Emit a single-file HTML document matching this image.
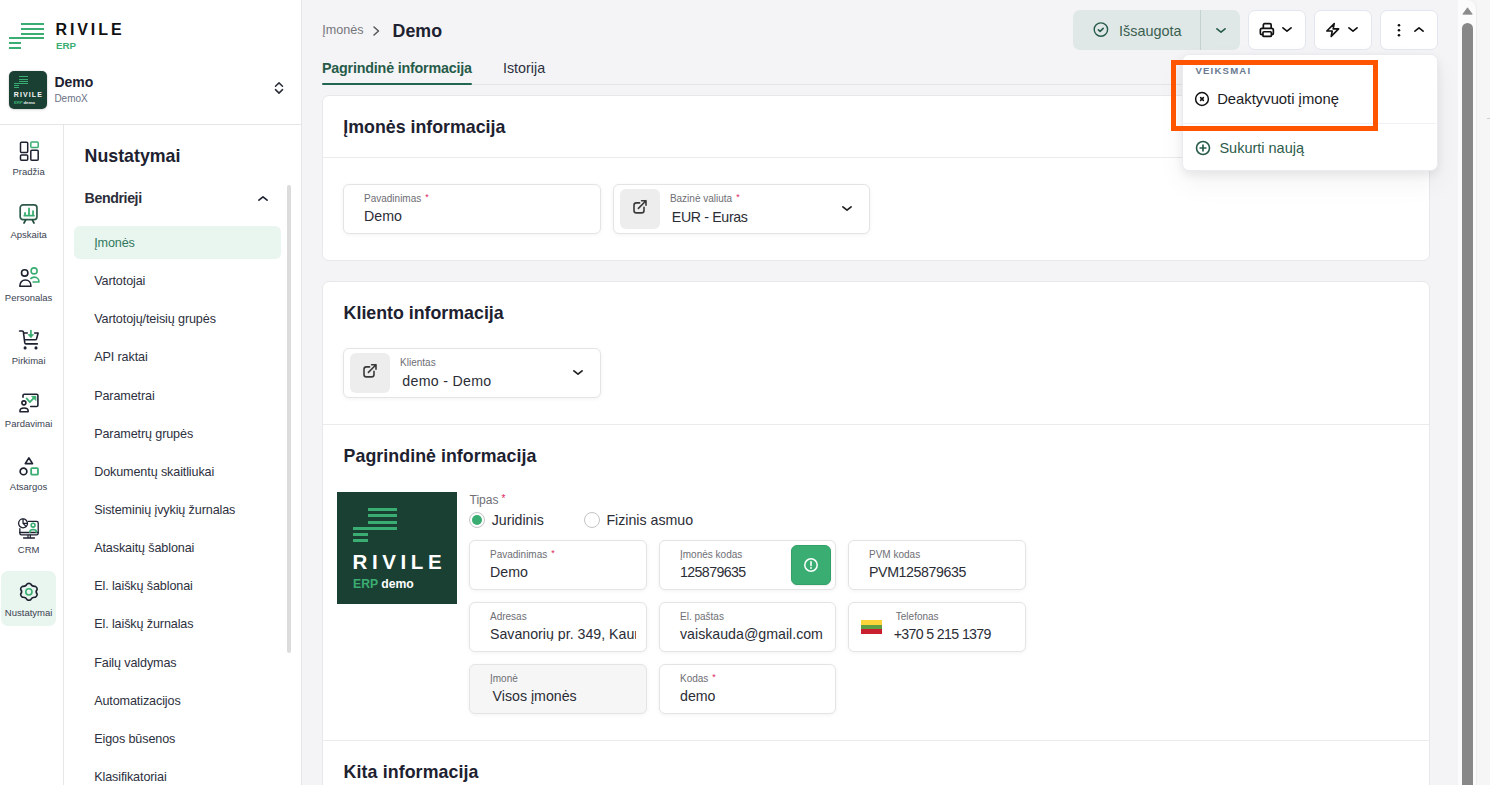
<!DOCTYPE html>
<html><head><meta charset="utf-8"><style>
html,body{margin:0;padding:0;width:1490px;height:785px;overflow:hidden;background:#f4f4f6}
body{position:relative;font-family:"Liberation Sans", sans-serif}
.a{position:absolute}
.t{position:absolute;line-height:1;white-space:nowrap}
svg.a{overflow:visible}
</style></head><body>
<div class="a" style="left:0px;top:0px;width:1490px;height:785px;background:#f4f4f6"></div>
<div class="a" style="left:0px;top:0px;width:301px;height:785px;background:#fff;border-right:1px solid #e6e6e9;box-sizing:border-box;width:302px"></div>
<div class="a" style="left:0px;top:124px;width:301px;height:1px;background:#e6e6e9"></div>
<div class="a" style="left:63px;top:125px;width:1px;height:660px;background:#e6e6e9"></div>
<div class="a" style="left:21px;top:23px;width:23px;height:2.1px;background:#3aae72"></div>
<div class="a" style="left:21px;top:28px;width:23px;height:2.1px;background:#3aae72"></div>
<div class="a" style="left:21px;top:32.6px;width:23px;height:2.1px;background:#3aae72"></div>
<div class="a" style="left:9px;top:37.2px;width:35px;height:2.1px;background:#3aae72"></div>
<div class="a" style="left:9px;top:42px;width:12px;height:2.1px;background:#3aae72"></div>
<div class="a" style="left:9px;top:46.7px;width:12px;height:2.1px;background:#3aae72"></div>
<div class="t" style="left:55.50px;top:22.00px;font-size:16px;font-weight:700;color:#111;letter-spacing:2.9px;">RIVILE</div>
<div class="t" style="left:56.00px;top:41.00px;font-size:9.8px;font-weight:700;color:#3aae72;letter-spacing:0px;">ERP</div>
<div class="a" style="left:9px;top:71px;width:38px;height:38px;background:#1a4034;border-radius:5px;box-shadow:0 0 0 1px rgba(0,0,0,0.04),0 1px 3px rgba(0,0,0,0.12)"></div>
<div class="a" style="left:18.8px;top:76.4px;width:9.3px;height:1.1px;background:#3aae72"></div>
<div class="a" style="left:18.8px;top:78.7px;width:9.3px;height:1.1px;background:#3aae72"></div>
<div class="a" style="left:18.8px;top:81px;width:9.3px;height:1.1px;background:#3aae72"></div>
<div class="a" style="left:14px;top:83.1px;width:14.100000000000001px;height:1.1px;background:#3aae72"></div>
<div class="a" style="left:14px;top:85.3px;width:4.800000000000001px;height:1.1px;background:#3aae72"></div>
<div class="a" style="left:14px;top:87.3px;width:4.800000000000001px;height:1.1px;background:#3aae72"></div>
<div class="t" style="left:13.80px;top:91.00px;font-size:7px;font-weight:700;color:#f4f4f4;letter-spacing:1.1px;">RIVILE</div>
<div class="t" style="left:14.00px;top:101.00px;font-size:4.4px;font-weight:700;color:#e8e8e8;letter-spacing:-0.15px;"><span style="color:#3aae72">ERP</span> demo</div>
<div class="t" style="left:54.40px;top:75.00px;font-size:14px;font-weight:700;color:#1d2130;letter-spacing:0px;">Demo</div>
<div class="t" style="left:54.40px;top:94.00px;font-size:10px;font-weight:400;color:#6b7186;letter-spacing:0px;">DemoX</div>
<svg class="a" style="left:273px;top:80px" width="12" height="16" viewBox="0 0 12 16"><path d="M2.5 6.2 L6 2.9 L9.5 6.2 M2.5 9.6 L6 13.1 L9.5 9.6" fill="none" stroke="#2a2d37" stroke-width="1.5" stroke-linecap="round" stroke-linejoin="round"/></svg>
<div class="a" style="left:1px;top:571px;width:55px;height:55px;background:#e9f5ef;border-radius:7px"></div>
<div class="t" style="left:-2.40px;width:62px;text-align:center;top:167.00px;font-size:9.5px;font-weight:400;color:#3b3f52;letter-spacing:0px">Pradžia</div>
<div class="t" style="left:-2.40px;width:62px;text-align:center;top:230.00px;font-size:9.5px;font-weight:400;color:#3b3f52;letter-spacing:0px">Apskaita</div>
<div class="t" style="left:-2.40px;width:62px;text-align:center;top:293.00px;font-size:9.5px;font-weight:400;color:#3b3f52;letter-spacing:0px">Personalas</div>
<div class="t" style="left:-2.40px;width:62px;text-align:center;top:356.00px;font-size:9.5px;font-weight:400;color:#3b3f52;letter-spacing:0px">Pirkimai</div>
<div class="t" style="left:-2.40px;width:62px;text-align:center;top:419.00px;font-size:9.5px;font-weight:400;color:#3b3f52;letter-spacing:0px">Pardavimai</div>
<div class="t" style="left:-2.40px;width:62px;text-align:center;top:482.00px;font-size:9.5px;font-weight:400;color:#3b3f52;letter-spacing:0px">Atsargos</div>
<div class="t" style="left:-2.40px;width:62px;text-align:center;top:545.00px;font-size:9.5px;font-weight:400;color:#3b3f52;letter-spacing:0px">CRM</div>
<div class="t" style="left:-2.40px;width:62px;text-align:center;top:608.00px;font-size:9.5px;font-weight:400;color:#3b3f52;letter-spacing:0px">Nustatymai</div>
<svg class="a" style="left:19px;top:141px" width="20" height="20" viewBox="0 0 20 20"><g fill="none" stroke-width="1.5" stroke-linejoin="round"><rect x="1.5" y="1.2" width="7.2" height="10.2" rx="1" stroke="#1d2130"/><rect x="11.8" y="1" width="7.4" height="5.6" rx="1" stroke="#3aae72"/><rect x="1.5" y="14" width="7.2" height="5.2" rx="1" stroke="#1d2130"/><rect x="11.8" y="9.2" width="7.4" height="10" rx="1" stroke="#1d2130"/></g></svg>
<svg class="a" style="left:19px;top:204px" width="20" height="20" viewBox="0 0 20 20"><g fill="none" stroke-linecap="round" stroke-linejoin="round"><rect x="1.2" y="0.95" width="16.75" height="14.7" rx="2.8" stroke="#2e5a4b" stroke-width="1.7"/><path d="M6.6 16.2 L5 19 M13.4 16.2 L15 19" stroke="#1e4a3a" stroke-width="1.7"/><path d="M5.3 11.7 H14.9 M6 11.7 V9 M10 11.7 V4.3 M14.05 11.7 V7.1" stroke="#3aae72" stroke-width="1.8"/></g></svg>
<svg class="a" style="left:19px;top:267px" width="20" height="20" viewBox="0 0 20 20"><g fill="none" stroke-width="1.6" stroke-linejoin="round"><circle cx="5.7" cy="5.9" r="3.2" stroke="#1d2130"/><path d="M0.8 19.2 C0.8 15.5 3 12.95 6.4 12.95 C9.8 12.95 12 15.5 12 19.2 Z" stroke="#1d2130"/><circle cx="15.1" cy="3.9" r="3" stroke="#3aae72"/><path d="M11.3 12 C12.3 10.8 13.8 10.1 15.5 10.1 C18 10.1 20 12.3 20 15 H13.5" stroke="#3aae72"/></g></svg>
<svg class="a" style="left:19px;top:330px" width="20" height="20" viewBox="0 0 20 20"><g fill="none" stroke-width="1.6" stroke-linecap="round" stroke-linejoin="round"><path d="M0.6 1 H3.4 Q4.2 1 4.4 2 L5.8 12.9 Q6 13.9 7 13.9 H18.3" stroke="#1d2130"/><path d="M5.2 3 H8.3 M15.7 3 H19.1 L17.5 9.1 Q17.3 9.8 16.5 9.8 H6.4" stroke="#1d2130"/><path d="M11.9 0.6 V6.6" stroke="#3aae72" stroke-width="1.7"/></g><path d="M9.2 4.6 H14.6 L11.9 7.6 Z" fill="#3aae72" stroke="#3aae72" stroke-width="0.8" stroke-linejoin="round"/><circle cx="6.1" cy="17.9" r="1.55" fill="#1d2130"/><circle cx="17" cy="17.9" r="1.55" fill="#1d2130"/></svg>
<svg class="a" style="left:19px;top:393px" width="20" height="20" viewBox="0 0 20 20"><g fill="none" stroke-width="1.6" stroke-linecap="round" stroke-linejoin="round"><path d="M4 4.2 V2.6 Q4 1.3 5.3 1.3 H17.6 Q18.9 1.3 18.9 2.6 V12.2 Q18.9 13.5 17.6 13.5 H11.7" stroke="#1d2130"/><circle cx="4.9" cy="9.85" r="2" stroke="#1d2130"/><path d="M1 18.8 V17.8 C1 16.1 2.6 15.05 5.05 15.05 C7.5 15.05 9.1 16.1 9.1 17.8 V18.8 Z" stroke="#1d2130"/><path d="M7.6 5.4 L10.9 9.1 L15.6 4.1" stroke="#3aae72" stroke-width="1.7"/></g><path d="M12.6 3.3 H16.9 V7.6 Z" fill="#3aae72" stroke="#3aae72" stroke-width="0.8" stroke-linejoin="round"/></svg>
<svg class="a" style="left:19px;top:456px" width="20" height="20" viewBox="0 0 20 20"><g fill="none" stroke-width="1.7" stroke-linejoin="round"><path d="M9.9 1.9 L6.3 7.6 H13.5 Z" stroke="#1d2130"/><circle cx="4.5" cy="15.4" r="3.35" stroke="#1d2130"/><rect x="12.15" y="12.1" width="6.8" height="6.6" rx="1" stroke="#3aae72" stroke-width="1.8"/></g></svg>
<svg class="a" style="left:19px;top:519px" width="20" height="20" viewBox="0 0 20 20"><g fill="none" stroke-width="1.3" stroke-linejoin="round" stroke-linecap="round"><path d="M9.3 2.45 H17.6 Q19.2 2.45 19.2 4 V14.3 Q19.2 15.85 17.6 15.85 H2.4 Q0.85 15.85 0.85 14.3 V9.6" stroke="#1d2130"/><path d="M0.85 13.5 H19.2" stroke="#1d2130" stroke-width="1.5"/><path d="M9 16 V18.6 M11.3 16 V18.6" stroke="#1d2130" stroke-width="1.2"/><path d="M4.6 19 H15.4" stroke="#1d2130" stroke-width="1.4"/><circle cx="4.05" cy="4.35" r="4.45" stroke="#1d2130" stroke-width="1.3"/><path d="M4.05 0.2 V4.35 H8.4 M4.05 4.35 L7.1 7.4" stroke="#1d2130" stroke-width="1.3"/><circle cx="14.1" cy="6.2" r="1.9" stroke="#3aae72" stroke-width="1.6"/><path d="M10.9 13.3 V12.5 C10.9 11 12.3 10.6 14.1 10.6 C15.9 10.6 17.3 11 17.3 12.5 V13.3" stroke="#3aae72" stroke-width="1.6"/></g></svg>
<svg class="a" style="left:19px;top:582px" width="20" height="20" viewBox="0 0 20 20"><g fill="none" stroke-width="1.6" stroke-linejoin="round"><path d="M11.67 1.84 C12.55 3.82 14.14 4.66 16.43 4.36 Q18.20 5.30 18.20 7.30 C16.79 8.97 16.79 10.63 18.20 12.30 Q18.20 14.30 16.43 15.24 C14.14 14.94 12.55 15.78 11.67 17.76 Q9.90 18.70 8.13 17.76 C7.25 15.78 5.66 14.94 3.37 15.24 Q1.60 14.30 1.60 12.30 C3.01 10.63 3.01 8.97 1.60 7.30 Q1.60 5.30 3.37 4.36 C5.66 4.66 7.25 3.82 8.13 1.84 Q9.90 0.90 11.67 1.84 Z" stroke="#1d2130"/><circle cx="9.9" cy="9.85" r="3.1" stroke="#3aae72" stroke-width="1.6"/></g></svg>
<div class="t" style="left:84.60px;top:148.00px;font-size:17.8px;font-weight:700;color:#1d2130;letter-spacing:0px;">Nustatymai</div>
<div class="t" style="left:84.60px;top:191.00px;font-size:14.2px;font-weight:700;color:#2b2e3a;letter-spacing:-0.4px;">Bendrieji</div>
<svg class="a" style="left:256px;top:192.25px" width="14" height="12" viewBox="0 0 14 12"><path d="M2.9 8.2 L7 4.8 L11.1 8.2" fill="none" stroke="#1d2130" stroke-width="1.6" stroke-linecap="round" stroke-linejoin="round"/></svg>
<div class="a" style="left:74px;top:226px;width:207px;height:33px;background:#e9f5ef;border-radius:6px"></div>
<div class="a" style="left:287px;top:185px;width:4px;height:468px;background:#dcdcdc;border-radius:2px"></div>
<div class="t" style="left:94.20px;top:237.00px;font-size:12.6px;font-weight:400;color:#31795d;letter-spacing:-0.12px;">Įmonės</div>
<div class="t" style="left:94.20px;top:275.00px;font-size:12.6px;font-weight:400;color:#2d3040;letter-spacing:-0.12px;">Vartotojai</div>
<div class="t" style="left:94.20px;top:313.00px;font-size:12.6px;font-weight:400;color:#2d3040;letter-spacing:-0.12px;">Vartotojų/teisių grupės</div>
<div class="t" style="left:94.20px;top:351.00px;font-size:12.6px;font-weight:400;color:#2d3040;letter-spacing:-0.12px;">API raktai</div>
<div class="t" style="left:94.20px;top:390.00px;font-size:12.6px;font-weight:400;color:#2d3040;letter-spacing:-0.12px;">Parametrai</div>
<div class="t" style="left:94.20px;top:428.00px;font-size:12.6px;font-weight:400;color:#2d3040;letter-spacing:-0.12px;">Parametrų grupės</div>
<div class="t" style="left:94.20px;top:466.00px;font-size:12.6px;font-weight:400;color:#2d3040;letter-spacing:-0.12px;">Dokumentų skaitliukai</div>
<div class="t" style="left:94.20px;top:504.00px;font-size:12.6px;font-weight:400;color:#2d3040;letter-spacing:-0.12px;">Sisteminių įvykių žurnalas</div>
<div class="t" style="left:94.20px;top:542.00px;font-size:12.6px;font-weight:400;color:#2d3040;letter-spacing:-0.12px;">Ataskaitų šablonai</div>
<div class="t" style="left:94.20px;top:580.00px;font-size:12.6px;font-weight:400;color:#2d3040;letter-spacing:-0.12px;">El. laiškų šablonai</div>
<div class="t" style="left:94.20px;top:618.00px;font-size:12.6px;font-weight:400;color:#2d3040;letter-spacing:-0.12px;">El. laiškų žurnalas</div>
<div class="t" style="left:94.20px;top:657.00px;font-size:12.6px;font-weight:400;color:#2d3040;letter-spacing:-0.12px;">Failų valdymas</div>
<div class="t" style="left:94.20px;top:695.00px;font-size:12.6px;font-weight:400;color:#2d3040;letter-spacing:-0.12px;">Automatizacijos</div>
<div class="t" style="left:94.20px;top:733.00px;font-size:12.6px;font-weight:400;color:#2d3040;letter-spacing:-0.12px;">Eigos būsenos</div>
<div class="t" style="left:94.20px;top:771.00px;font-size:12.6px;font-weight:400;color:#2d3040;letter-spacing:-0.12px;">Klasifikatoriai</div>
<div class="t" style="left:322.30px;top:24.00px;font-size:12.6px;font-weight:400;color:#76767c;letter-spacing:0px;">Įmonės</div>
<svg class="a" style="left:370px;top:24px" width="12" height="14" viewBox="0 0 12 14"><path d="M4 3 L8.5 7 L4 11" fill="none" stroke="#555" stroke-width="1.5" stroke-linecap="round" stroke-linejoin="round"/></svg>
<div class="t" style="left:392.60px;top:23.00px;font-size:17.8px;font-weight:700;color:#1d2130;letter-spacing:0px;">Demo</div>
<div class="t" style="left:322.00px;top:61.00px;font-size:14.3px;font-weight:700;color:#275b49;letter-spacing:-0.2px;">Pagrindinė informacija</div>
<div class="t" style="left:503.00px;top:61.00px;font-size:14.3px;font-weight:400;color:#2d3040;letter-spacing:0px;">Istorija</div>
<div class="a" style="left:322px;top:84px;width:1108px;height:1px;background:#e3e3e6"></div>
<div class="a" style="left:322px;top:83px;width:150px;height:2px;background:#23664f;border-radius:1px"></div>
<div class="a" style="left:1073px;top:10px;width:167px;height:40px;background:#dfe8e7;border-radius:7px"></div>
<div class="a" style="left:1200px;top:10px;width:1px;height:40px;background:#c5d3cf"></div>
<svg class="a" style="left:1092px;top:21px" width="17" height="17" viewBox="0 0 17 17"><circle cx="8.9" cy="8.6" r="6.7" fill="none" stroke="#275b49" stroke-width="1.4"/><path d="M6.4 8.9 L8.1 10.4 L11.2 7.4" fill="none" stroke="#275b49" stroke-width="1.6" stroke-linecap="round" stroke-linejoin="round"/></svg>
<div class="t" style="left:1119.00px;top:24.00px;font-size:14.4px;font-weight:400;color:#3b5e4f;letter-spacing:0px;">Išsaugota</div>
<svg class="a" style="left:1214.1px;top:23.5px" width="14" height="12" viewBox="0 0 14 12"><path d="M2.9 4.8 L7 8.2 L11.1 4.8" fill="none" stroke="#275b49" stroke-width="1.6" stroke-linecap="round" stroke-linejoin="round"/></svg>
<div class="a" style="left:1248px;top:10px;width:58px;height:40px;background:#fff;border:1px solid #e1e6ef;border-radius:7px;box-sizing:border-box"></div>
<div class="a" style="left:1314px;top:10px;width:58px;height:40px;background:#fff;border:1px solid #e1e6ef;border-radius:7px;box-sizing:border-box"></div>
<div class="a" style="left:1380px;top:10px;width:58px;height:40px;background:#fff;border:1px solid #e1e6ef;border-radius:7px;box-sizing:border-box"></div>
<svg class="a" style="left:1259px;top:22px" width="16" height="16" viewBox="0 0 16 16"><g fill="none" stroke="#111" stroke-width="1.7" stroke-linejoin="round"><path d="M4.35 6.2 V3 Q4.35 1.65 5.7 1.65 H10.8 Q12.15 1.65 12.15 3 V6.2"/><path d="M3.9 12.75 H3 Q1.35 12.75 1.35 11.1 V8 Q1.35 6.35 3 6.35 H12.7 Q14.35 6.35 14.35 8 V11.1 Q14.35 12.75 12.7 12.75 H12.35"/><rect x="3.95" y="9.75" width="8.4" height="4.7" rx="1"/></g></svg>
<svg class="a" style="left:1280px;top:23.35px" width="14" height="12" viewBox="0 0 14 12"><path d="M2.9 4.8 L7 8.2 L11.1 4.8" fill="none" stroke="#111" stroke-width="1.6" stroke-linecap="round" stroke-linejoin="round"/></svg>
<svg class="a" style="left:1325px;top:22px" width="16" height="16" viewBox="0 0 16 16"><path d="M9.2 1.6 L1.8 9 H7.2 L6.2 14.4 L13.6 6.9 H8.2 Z" fill="none" stroke="#111" stroke-width="1.6" stroke-linejoin="round"/></svg>
<svg class="a" style="left:1346.2px;top:23.35px" width="14" height="12" viewBox="0 0 14 12"><path d="M2.9 4.8 L7 8.2 L11.1 4.8" fill="none" stroke="#111" stroke-width="1.6" stroke-linecap="round" stroke-linejoin="round"/></svg>
<svg class="a" style="left:1395px;top:22px" width="8" height="17" viewBox="0 0 8 17"><circle cx="4" cy="3.2" r="1.3" fill="#111"/><circle cx="4" cy="8.2" r="1.3" fill="#111"/><circle cx="4" cy="13.2" r="1.3" fill="#111"/></svg>
<svg class="a" style="left:1412.1px;top:23.35px" width="14" height="12" viewBox="0 0 14 12"><path d="M2.9 8.2 L7 4.8 L11.1 8.2" fill="none" stroke="#111" stroke-width="1.6" stroke-linecap="round" stroke-linejoin="round"/></svg>
<div class="a" style="left:322px;top:95px;width:1108px;height:166px;background:#fff;border:1px solid #e8e8eb;border-radius:7px;box-sizing:border-box"></div>
<div class="a" style="left:323px;top:157px;width:1106px;height:1px;background:#ebebee"></div>
<div class="t" style="left:343.30px;top:119.00px;font-size:17.8px;font-weight:700;color:#1d2130;letter-spacing:0px;">Įmonės informacija</div>
<div class="a" style="left:343px;top:184px;width:258px;height:50px;background:#fff;border:1px solid #e4e4e6;border-radius:6px;box-sizing:border-box;box-shadow:0 1px 4px rgba(0,0,0,0.05)"></div>
<div class="t" style="left:364.00px;top:194.00px;font-size:10px;font-weight:400;color:#6e6e74;letter-spacing:0px;">Pavadinimas<span style="color:#e0245e;font-size:9px;position:relative;top:-2px;margin-left:4px">*</span></div>
<div class="t" style="left:364.00px;top:209.00px;font-size:14.2px;font-weight:400;color:#2b2d36;letter-spacing:0px;">Demo</div>
<div class="a" style="left:613px;top:184px;width:257px;height:50px;background:#fff;border:1px solid #e4e4e6;border-radius:6px;box-sizing:border-box;box-shadow:0 1px 4px rgba(0,0,0,0.05)"></div>
<div class="a" style="left:620px;top:189px;width:40px;height:40px;background:#ededed;border-radius:6px"></div>
<svg class="a" style="left:632px;top:199px" width="16" height="16" viewBox="0 0 16 16"><g fill="none" stroke="#3a3a3a" stroke-width="1.6" stroke-linecap="round" stroke-linejoin="round"><path d="M7.6 3.9 H4.4 Q2 3.9 2 6.3 V11.5 Q2 13.9 4.4 13.9 H9.6 Q12 13.9 12 11.5 V8.3"/><path d="M6.4 9.35 L14 1.7 M9.6 1.7 H14 V6.3"/></g></svg>
<div class="t" style="left:669.90px;top:194.00px;font-size:10px;font-weight:400;color:#6e6e74;letter-spacing:0px;">Bazinė valiuta<span style="color:#e0245e;font-size:9px;position:relative;top:-2px;margin-left:4px">*</span></div>
<div class="t" style="left:671.80px;top:210.00px;font-size:14.2px;font-weight:400;color:#2b2d36;letter-spacing:-0.35px;">EUR - Euras</div>
<svg class="a" style="left:840px;top:202px" width="14" height="12" viewBox="0 0 14 12"><path d="M2.9 4.8 L7 8.2 L11.1 4.8" fill="none" stroke="#222" stroke-width="1.7" stroke-linecap="round" stroke-linejoin="round"/></svg>
<div class="a" style="left:322px;top:281px;width:1108px;height:600px;background:#fff;border:1px solid #e8e8eb;border-radius:7px;box-sizing:border-box"></div>
<div class="t" style="left:343.60px;top:305.00px;font-size:17.8px;font-weight:700;color:#1d2130;letter-spacing:0px;">Kliento informacija</div>
<div class="a" style="left:343px;top:348px;width:258px;height:50px;background:#fff;border:1px solid #e4e4e6;border-radius:6px;box-sizing:border-box;box-shadow:0 1px 4px rgba(0,0,0,0.05)"></div>
<div class="a" style="left:350px;top:353px;width:40px;height:40px;background:#ededed;border-radius:6px"></div>
<svg class="a" style="left:362px;top:363px" width="16" height="16" viewBox="0 0 16 16"><g fill="none" stroke="#3a3a3a" stroke-width="1.6" stroke-linecap="round" stroke-linejoin="round"><path d="M7.6 3.9 H4.4 Q2 3.9 2 6.3 V11.5 Q2 13.9 4.4 13.9 H9.6 Q12 13.9 12 11.5 V8.3"/><path d="M6.4 9.35 L14 1.7 M9.6 1.7 H14 V6.3"/></g></svg>
<div class="t" style="left:400.10px;top:358.00px;font-size:10px;font-weight:400;color:#6e6e74;letter-spacing:0px;">Klientas</div>
<div class="t" style="left:402.30px;top:374.00px;font-size:14.2px;font-weight:400;color:#2b2d36;letter-spacing:0.3px;">demo - Demo</div>
<svg class="a" style="left:570.9px;top:365.85px" width="14" height="12" viewBox="0 0 14 12"><path d="M2.9 4.8 L7 8.2 L11.1 4.8" fill="none" stroke="#222" stroke-width="1.7" stroke-linecap="round" stroke-linejoin="round"/></svg>
<div class="a" style="left:323px;top:424px;width:1106px;height:1px;background:#ebebee"></div>
<div class="t" style="left:343.60px;top:448.00px;font-size:17.8px;font-weight:700;color:#1d2130;letter-spacing:0.05px;">Pagrindinė informacija</div>
<div class="a" style="left:337px;top:492px;width:120px;height:112px;background:#1a4034"></div>
<div class="a" style="left:368px;top:508.3px;width:29px;height:3px;background:#3aae72"></div>
<div class="a" style="left:368px;top:514.4px;width:29px;height:3px;background:#3aae72"></div>
<div class="a" style="left:368px;top:520.5px;width:29px;height:3px;background:#3aae72"></div>
<div class="a" style="left:353px;top:526.6px;width:44px;height:3px;background:#3aae72"></div>
<div class="a" style="left:353px;top:532.8px;width:15px;height:3px;background:#3aae72"></div>
<div class="a" style="left:353px;top:539px;width:15px;height:3px;background:#3aae72"></div>
<div class="t" style="left:352.50px;top:552.00px;font-size:20.5px;font-weight:700;color:#fff;letter-spacing:4.6px;">RIVILE</div>
<div class="t" style="left:353.00px;top:578.00px;font-size:12.2px;font-weight:700;color:#fff;letter-spacing:0px;"><span style="color:#3aae72">ERP</span> demo</div>
<div class="t" style="left:469.50px;top:494.00px;font-size:12px;font-weight:400;color:#6e6e74;letter-spacing:0px;">Tipas<span style="color:#e0245e;font-size:10px;position:relative;top:-2px;margin-left:3px">*</span></div>
<div class="a" style="left:469px;top:512px;width:16px;height:16px;border-radius:50%;border:1.5px solid #c4c4c6;box-sizing:border-box;background:#fff"></div>
<div class="a" style="left:472px;top:515px;width:10px;height:10px;border-radius:50%;background:#3aae72"></div>
<div class="t" style="left:491.70px;top:513.00px;font-size:14.2px;font-weight:400;color:#2b2d36;letter-spacing:0px;">Juridinis</div>
<div class="a" style="left:584px;top:512px;width:16px;height:16px;border-radius:50%;border:1.5px solid #c4c4c6;box-sizing:border-box;background:#fff"></div>
<div class="t" style="left:606.40px;top:513.00px;font-size:14.2px;font-weight:400;color:#2b2d36;letter-spacing:0px;">Fizinis asmuo</div>
<div class="a" style="left:469px;top:540px;width:178px;height:50px;background:#fff;border:1px solid #e4e4e6;border-radius:6px;box-sizing:border-box;box-shadow:0 1px 4px rgba(0,0,0,0.05)"></div>
<div class="t" style="left:490.00px;top:550.00px;font-size:10px;font-weight:400;color:#6e6e74;letter-spacing:0px;">Pavadinimas<span style="color:#e0245e;font-size:9px;position:relative;top:-2px;margin-left:4px">*</span></div>
<div class="t" style="left:490.00px;top:565.00px;font-size:14.2px;font-weight:400;color:#2b2d36;letter-spacing:0px;">Demo</div>
<div class="a" style="left:659px;top:540px;width:177px;height:50px;background:#fff;border:1px solid #e4e4e6;border-radius:6px;box-sizing:border-box;box-shadow:0 1px 4px rgba(0,0,0,0.05)"></div>
<div class="t" style="left:680.00px;top:550.00px;font-size:10px;font-weight:400;color:#6e6e74;letter-spacing:0px;">Įmonės kodas</div>
<div class="t" style="left:680.00px;top:565.00px;font-size:14.2px;font-weight:400;color:#2b2d36;letter-spacing:-0.6px;">125879635</div>
<div class="a" style="left:791px;top:545px;width:40px;height:40px;background:#3aae72;border:1px solid #33a067;box-sizing:border-box;border-radius:6px;box-shadow:0 1px 2px rgba(0,0,0,0.08)"></div>
<svg class="a" style="left:803px;top:557px" width="16" height="16" viewBox="0 0 16 16"><circle cx="8" cy="8" r="6.2" fill="none" stroke="#fff" stroke-width="1.5"/><path d="M8 4.8 V8.6" stroke="#fff" stroke-width="1.6" stroke-linecap="round"/><circle cx="8" cy="11" r="0.9" fill="#fff"/></svg>
<div class="a" style="left:848px;top:540px;width:178px;height:50px;background:#fff;border:1px solid #e4e4e6;border-radius:6px;box-sizing:border-box;box-shadow:0 1px 4px rgba(0,0,0,0.05)"></div>
<div class="t" style="left:869.00px;top:550.00px;font-size:10px;font-weight:400;color:#6e6e74;letter-spacing:0px;">PVM kodas</div>
<div class="t" style="left:869.00px;top:565.00px;font-size:14.2px;font-weight:400;color:#2b2d36;letter-spacing:-0.4px;">PVM125879635</div>
<div class="a" style="left:469px;top:602px;width:178px;height:50px;background:#fff;border:1px solid #e4e4e6;border-radius:6px;box-sizing:border-box;box-shadow:0 1px 4px rgba(0,0,0,0.05)"></div>
<div class="t" style="left:490.00px;top:612.00px;font-size:10px;font-weight:400;color:#6e6e74;letter-spacing:0px;">Adresas</div>
<div class="t" style="left:490.00px;top:627.00px;font-size:14.2px;font-weight:400;color:#2b2d36;letter-spacing:0px;"><span style="display:inline-block;width:146px;overflow:hidden;white-space:nowrap;vertical-align:top">Savanorių pr. 349, Kaunas</span></div>
<div class="a" style="left:659px;top:602px;width:177px;height:50px;background:#fff;border:1px solid #e4e4e6;border-radius:6px;box-sizing:border-box;box-shadow:0 1px 4px rgba(0,0,0,0.05)"></div>
<div class="t" style="left:680.00px;top:612.00px;font-size:10px;font-weight:400;color:#6e6e74;letter-spacing:0px;">El. paštas</div>
<div class="t" style="left:680.00px;top:627.00px;font-size:14.2px;font-weight:400;color:#2b2d36;letter-spacing:0px;">vaiskauda@gmail.com</div>
<div class="a" style="left:848px;top:602px;width:178px;height:50px;background:#fff;border:1px solid #e4e4e6;border-radius:6px;box-sizing:border-box;box-shadow:0 1px 4px rgba(0,0,0,0.05)"></div>
<div class="t" style="left:895.80px;top:612.00px;font-size:10px;font-weight:400;color:#6e6e74;letter-spacing:0px;">Telefonas</div>
<div class="t" style="left:893.70px;top:627.00px;font-size:14.2px;font-weight:400;color:#2b2d36;letter-spacing:-0.65px;">+370 5 215 1379</div>
<div class="a" style="left:861px;top:620px;width:21px;height:4.7px;background:#fdd43a"></div>
<div class="a" style="left:861px;top:624.7px;width:21px;height:4.6px;background:#5f9e42"></div>
<div class="a" style="left:861px;top:629.3px;width:21px;height:4.7px;background:#c8202e"></div>
<div class="a" style="left:469px;top:664px;width:178px;height:50px;background:#f6f6f6;border:1px solid #e4e4e6;border-radius:6px;box-sizing:border-box;box-shadow:0 1px 4px rgba(0,0,0,0.05)"></div>
<div class="t" style="left:490.00px;top:674.00px;font-size:10px;font-weight:400;color:#6e6e74;letter-spacing:0px;">Įmonė</div>
<div class="t" style="left:492.60px;top:689.00px;font-size:14.2px;font-weight:400;color:#2b2d36;letter-spacing:0px;">Visos įmonės</div>
<div class="a" style="left:659px;top:664px;width:177px;height:50px;background:#fff;border:1px solid #e4e4e6;border-radius:6px;box-sizing:border-box;box-shadow:0 1px 4px rgba(0,0,0,0.05)"></div>
<div class="t" style="left:680.00px;top:674.00px;font-size:10px;font-weight:400;color:#6e6e74;letter-spacing:0px;">Kodas<span style="color:#e0245e;font-size:9px;position:relative;top:-2px;margin-left:4px">*</span></div>
<div class="t" style="left:680.00px;top:689.00px;font-size:14.2px;font-weight:400;color:#2b2d36;letter-spacing:0px;">demo</div>
<div class="a" style="left:323px;top:740px;width:1106px;height:1px;background:#ebebee"></div>
<div class="t" style="left:343.60px;top:764.00px;font-size:17.8px;font-weight:700;color:#1d2130;letter-spacing:0.1px;">Kita informacija</div>
<div class="a" style="left:1182px;top:54px;width:256px;height:116.5px;background:#fff;border:1px solid #e9ebf0;border-radius:7px;box-sizing:border-box;box-shadow:0 4px 10px rgba(0,0,0,0.07),0 12px 28px rgba(0,0,0,0.05)"></div>
<div class="a" style="left:1183px;top:123px;width:253px;height:1px;background:#eef1f6"></div>
<div class="t" style="left:1195.40px;top:66.00px;font-size:9.6px;font-weight:700;color:#6b7a90;letter-spacing:1.2px;">VEIKSMAI</div>
<svg class="a" style="left:1194px;top:91px" width="16" height="16" viewBox="0 0 16 16"><circle cx="8" cy="8" r="6.4" fill="none" stroke="#111" stroke-width="1.5"/><path d="M6.6 6.6 L9.4 9.4 M9.4 6.6 L6.6 9.4" stroke="#111" stroke-width="1.5" stroke-linecap="round"/></svg>
<div class="t" style="left:1217.20px;top:92.00px;font-size:14.8px;font-weight:400;color:#1c1c1f;letter-spacing:0px;">Deaktyvuoti įmonę</div>
<svg class="a" style="left:1195px;top:140px" width="16" height="16" viewBox="0 0 16 16"><circle cx="8" cy="8" r="6.5" fill="none" stroke="#275b49" stroke-width="1.6"/><path d="M8 5.2 V10.8 M5.2 8 H10.8" stroke="#275b49" stroke-width="1.7" stroke-linecap="round"/></svg>
<div class="t" style="left:1219.40px;top:141.00px;font-size:14.5px;font-weight:400;color:#2d5c4b;letter-spacing:0px;">Sukurti naują</div>
<div class="a" style="left:1171px;top:60px;width:207px;height:71px;border:5px solid #ff5500;box-sizing:border-box"></div>
<div class="a" style="left:1458px;top:0px;width:19px;height:785px;background:#fbfbfb;border-right:1px solid #ececec;border-top-right-radius:9px;box-sizing:border-box"></div>
<div class="a" style="left:1477px;top:0px;width:13px;height:785px;background:#f6f6f6"></div>
<div class="a" style="left:1487px;top:118px;width:3px;height:1px;background:#cfcfcf"></div>
<svg class="a" style="left:1462px;top:7px" width="11" height="8" viewBox="0 0 11 8"><path d="M5.5 0.8 L10.2 7.2 H0.8 Z" fill="#8a8a8a" stroke="#8a8a8a" stroke-width="0.8" stroke-linejoin="round"/></svg>
<div class="a" style="left:1462px;top:23px;width:11px;height:762px;background:#888;border-radius:5.5px 5.5px 0 0"></div>
</body></html>
